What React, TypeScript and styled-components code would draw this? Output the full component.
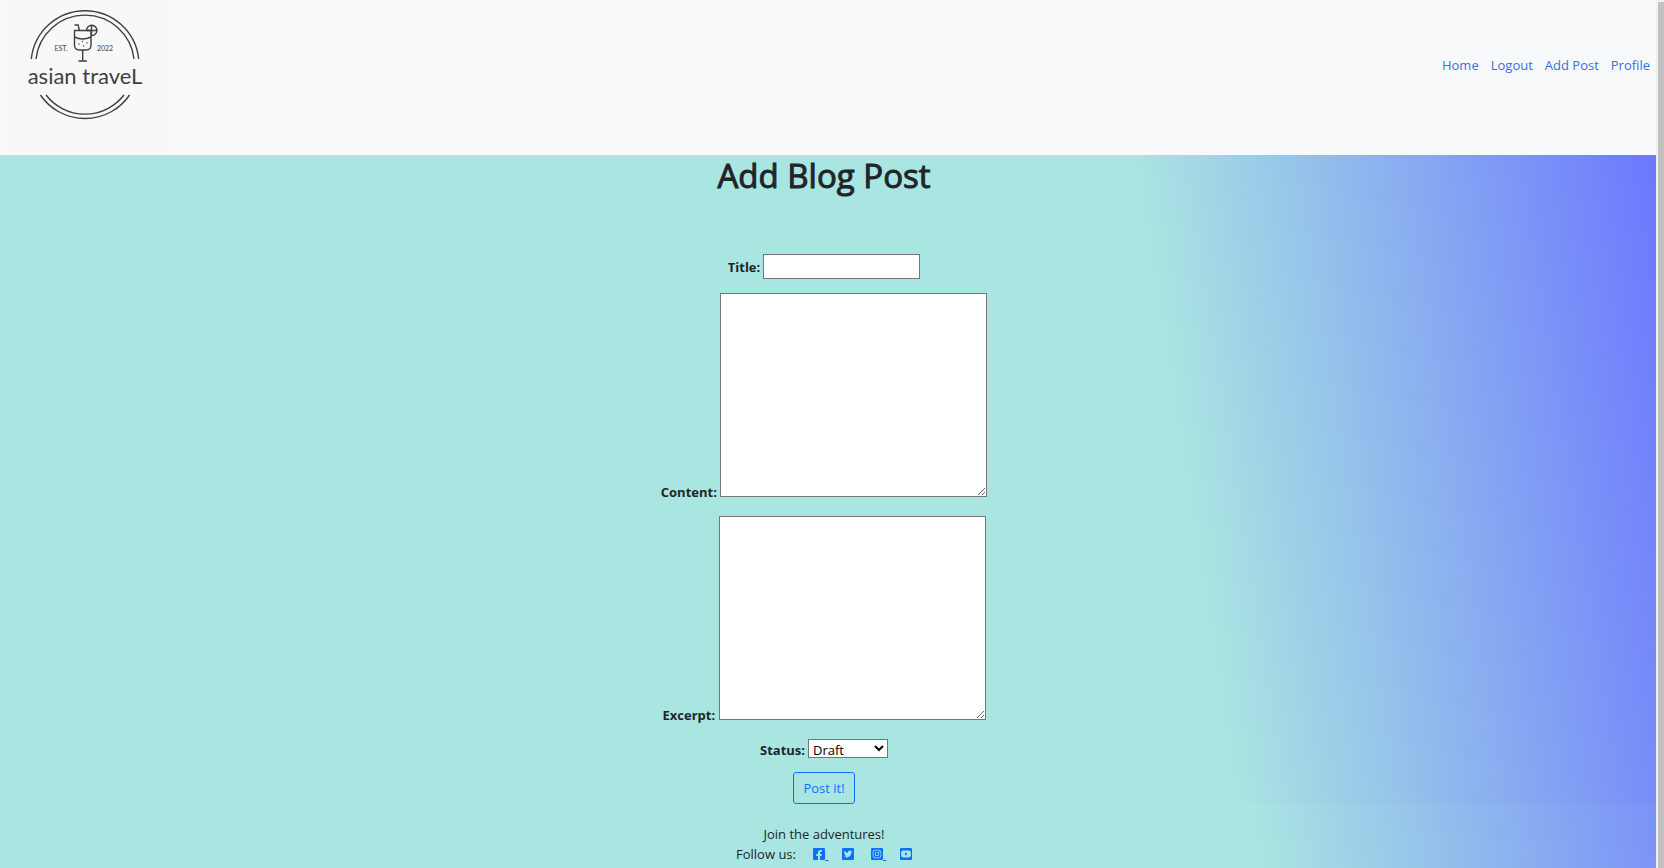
import React from "react";
import styled, { createGlobalStyle } from "styled-components";
import {
  FaFacebookSquare,
  FaInstagramSquare,
  FaTwitterSquare,
  FaYoutubeSquare,
} from "react-icons/fa";

const GlobalStyle = createGlobalStyle`
  *, *::before, *::after { box-sizing: border-box; }
  body {
    margin: 0;
    font-family: "Segoe UI", "Open Sans", "Noto Sans", sans-serif;
    font-size: 13px;
    line-height: 20px;
    color: #212529;
  }
`;

const gradient = "linear-gradient(81deg, #aae6e1 70%, #6b78fe 100%)";

const Shell = styled.div`
  display: flex;
  min-height: 100vh;
`;

const Page = styled.div`
  flex: 1;
  min-width: 0;
  background: ${gradient};
`;

const ScrollRail = styled.div`
  display: flex;
  width: 8px;
  padding: 2px 0 0 2px;
  background: #f1f1f4;
`;

const ScrollThumb = styled.div`
  flex: 1;
  background: #c1c1c1;
`;

const Header = styled.header`
  display: flex;
  align-items: flex-start;
  justify-content: space-between;
  height: 155px;
  background: #f8f9fb;
`;

const LogoLink = styled.a`
  margin-left: 4px;
  background: #f8f8f9;
`;

const LogoArt = styled.svg`
  display: block;
  width: 166px;
  height: 150px;
`;

const Nav = styled.nav`
  display: flex;
  gap: 12px;
  padding: 55px 6px 0 0;
`;

const NavLink = styled.a`
  color: #3b6fe0;
  text-decoration: none;
`;

const Main = styled.main`
  padding-right: 8px;
  background: ${gradient};
`;

const Heading = styled.h1`
  margin: 0 0 58px;
  font-size: 33px;
  line-height: 41px;
  font-weight: 500;
  -webkit-text-stroke: 1px currentColor;
  text-align: center;
`;

const Form = styled.form`
  display: flex;
  flex-direction: column;
  align-items: center;
`;

const Field = styled.div<{ $gap: number }>`
  display: flex;
  align-items: baseline;
  gap: 3px;
  margin-bottom: ${(p) => p.$gap}px;
`;

const AreaField = styled.div`
  margin-bottom: 14px;
`;

const Label = styled.label`
  font-weight: 700;
`;

const TextInput = styled.input`
  width: 157px;
  height: 25px;
  padding: 1px 2px;
  border: 1px solid #767676;
  background: #fff;
  font: inherit;
`;

const TextArea = styled.textarea`
  width: 267px;
  height: 204px;
  padding: 2px;
  border: 1px solid #767676;
  background: #fff;
  font: inherit;
  resize: both;
`;

const Select = styled.select`
  width: 80px;
  height: 19px;
  padding: 0;
  border: 1px solid #767676;
  border-radius: 0;
  background: #fff;
  color: #000;
  font: inherit;
  line-height: 17px;
`;

const SubmitButton = styled.button`
  height: 32px;
  padding: 0 9px;
  border: 1px solid #0d6efd;
  border-radius: 3px;
  background: transparent;
  color: #0d6efd;
  font: inherit;
`;

const Footer = styled.footer`
  padding: 20px 8px 0 0;
  text-align: center;
`;

const FollowRow = styled.div`
  display: flex;
  justify-content: center;
  align-items: center;
  gap: 17px;
`;

const SocialList = styled.div`
  display: flex;
  gap: 12px;
`;

const SocialLink = styled.a`
  width: 17px;
  color: #0d6efd;
  white-space: pre;
  text-align: left;

  &:last-child {
    width: 12px;
  }

  svg {
    width: 12px;
    height: 14px;
    vertical-align: -2px;
  }
`;

function Logo() {
  return (
    <LogoArt viewBox="4 0 166 150" role="img" aria-label="Asian Travel">
      <g fill="none" stroke="#3f3f46" strokeWidth="1.4">
        <path d="M31.3 59A54 54 0 0 1 138.7 59" />
        <path d="M36 59A49.3 49.3 0 0 1 134 59" />
        <path d="M40.4 95A54 54 0 0 0 129.6 95" />
        <path d="M46 95A49.3 49.3 0 0 0 124 95" />
        <path d="M74.5 30.5H91V45Q91 50 86 50H79.5Q74.5 50 74.5 45Z" />
        <path d="M74.5 25H78L79.5 30.5M74.5 37Q82.5 41 91 37" />
        <path d="M82.7 50V61M78.5 61H87" />
        <path d="M86.5 30.5A5.2 5.2 0 1 1 91 35.6M91.5 25V35M86.5 30.5H97" />
      </g>
      <g fill="#3f3f46">
        <circle cx="79" cy="44" r="0.7" />
        <circle cx="82.5" cy="41.5" r="0.7" />
        <circle cx="83.5" cy="46" r="0.7" />
        <circle cx="87" cy="43" r="0.7" />
      </g>
      <g fill="#3f3f46" fontFamily="Lato, 'Liberation Sans', sans-serif" textAnchor="middle">
        <text x="61" y="51" fontSize="7">EST.</text>
        <text x="105" y="51" fontSize="7">2022</text>
        <text x="85" y="84" fontSize="22">asian traveL</text>
      </g>
    </LogoArt>
  );
}

const links = ["Home", "Logout", "Add Post", "Profile"];

export default function App() {
  return (
    <>
      <GlobalStyle />
      <Shell>
        <Page>
          <Header>
            <LogoLink href="#home">
              <Logo />
            </LogoLink>
            <Nav>
              {links.map((name) => (
                <NavLink key={name} href="#">
                  {name}
                </NavLink>
              ))}
            </Nav>
          </Header>
          <Main>
            <Heading>Add Blog Post</Heading>
            <Form onSubmit={(e) => e.preventDefault()}>
              <Field $gap={14}>
                <Label htmlFor="title">Title:</Label>
                <TextInput id="title" type="text" />
              </Field>
              <AreaField>
                <Label htmlFor="content">Content:</Label> <TextArea id="content" />
              </AreaField>
              <AreaField>
                <Label htmlFor="excerpt">Excerpt:</Label> <TextArea id="excerpt" />
              </AreaField>
              <Field $gap={12}>
                <Label htmlFor="status">Status:</Label>
                <Select id="status" defaultValue="Draft">
                  <option>Draft</option>
                  <option>Published</option>
                </Select>
              </Field>
              <SubmitButton type="submit">Post it!</SubmitButton>
            </Form>
          </Main>
          <Footer>
            <div>Join the adventures!</div>
            <FollowRow>
              <span>Follow us:</span>
              <SocialList>
                <SocialLink href="#" aria-label="Facebook"><FaFacebookSquare />{" "}</SocialLink>
                <SocialLink href="#" aria-label="Twitter"><FaTwitterSquare /></SocialLink>
                <SocialLink href="#" aria-label="Instagram"><FaInstagramSquare />{" "}</SocialLink>
                <SocialLink href="#" aria-label="YouTube"><FaYoutubeSquare /></SocialLink>
              </SocialList>
            </FollowRow>
          </Footer>
        </Page>
        <ScrollRail>
          <ScrollThumb />
        </ScrollRail>
      </Shell>
    </>
  );
}
